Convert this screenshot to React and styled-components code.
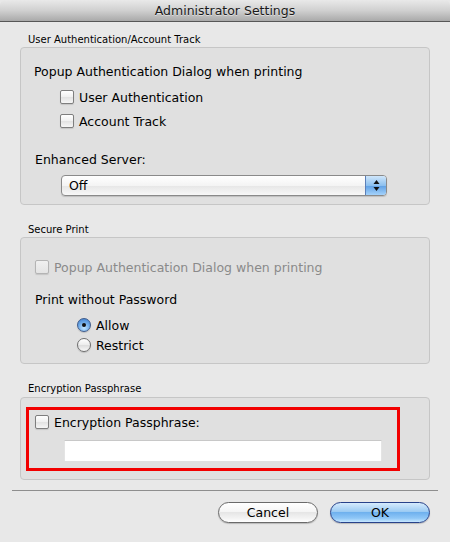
import React from "react"
import styled, { createGlobalStyle } from "styled-components"

const GlobalStyle = createGlobalStyle`
  html, body {
    margin: 0;
    padding: 0;
    background: #e8e8e8;
  }
  body {
    font-family: "DejaVu Sans", "Liberation Sans", sans-serif;
    color: #000;
  }
`

const Window = styled.div`
  width: 450px;
  height: 542px;
  background: #e8e8e8;
  display: flex;
  flex-direction: column;
  overflow: hidden;
  border-radius: 5px 5px 0 0;
`

const TitleBar = styled.div`
  height: 21px;
  border-bottom: 1px solid #575757;
  background: linear-gradient(#e9e9e9, #d0d0d0 50%, #a9a9a9);
  display: flex;
  align-items: center;
  justify-content: center;
  font-size: 12.5px;
  color: #1a1a1a;
  text-shadow: 0 1px 0 rgba(255, 255, 255, 0.5);
`

const Content = styled.div`
  padding: 11px 20px 0 20px;
  display: flex;
  flex-direction: column;
`

const Group = styled.section`
  display: flex;
  flex-direction: column;
  margin-bottom: ${(p) => p.$gap || 0}px;
`

const GroupLabel = styled.div`
  font-size: 10px;
  line-height: 14px;
  padding-left: 8px;
  margin-bottom: ${(p) => p.$after || 0}px;
`

const GroupBox = styled.div`
  border: 1px solid #c6c6c6;
  border-radius: 4px;
  background: #e0e0e0;
  padding: ${(p) => p.$pad};
  display: flex;
  flex-direction: column;
`

const Heading = styled.div`
  font-size: 12.5px;
  line-height: 16px;
  margin-left: ${(p) => p.$indent || 0}px;
  margin-top: ${(p) => p.$top || 0}px;
`

const Row = styled.label`
  display: flex;
  align-items: center;
  gap: 5px;
  height: ${(p) => p.$h || 24}px;
  margin-left: ${(p) => p.$indent || 0}px;
  margin-top: ${(p) => p.$top || 0}px;
  font-size: 12.5px;
  color: ${(p) => (p.$disabled ? "#8a8a8a" : "#000")};
`

const Box = styled.span`
  width: 12px;
  height: 12px;
  border: 1px solid ${(p) => (p.$disabled ? "#b4b4b4" : "#7e7e7e")};
  border-radius: 2px;
  background: ${(p) =>
    p.$disabled
      ? "linear-gradient(#f0f0f0, #e4e4e4)"
      : "linear-gradient(#ffffff, #f0f0f0 50%, #e2e2e2 51%, #f6f6f6)"};
  box-shadow: 0 1px 1px rgba(0, 0, 0, 0.12);
  flex: none;
`

const Radio = styled.span`
  position: relative;
  width: 12px;
  height: 12px;
  border-radius: 50%;
  border: 1px solid ${(p) => (p.$on ? "#3e5b8c" : "#6e6e6e")};
  background: ${(p) =>
    p.$on
      ? "radial-gradient(circle at 50% 75%, #bfe4ff, #6aa7e6 55%, #3a78c8)"
      : "linear-gradient(#ffffff, #ececec 50%, #dcdcdc 51%, #f8f8f8)"};
  box-shadow: 0 1px 1px rgba(0, 0, 0, 0.15);
  flex: none;

  &::after {
    content: "";
    display: ${(p) => (p.$on ? "block" : "none")};
    position: absolute;
    left: 4px;
    top: 4px;
    width: 4px;
    height: 4px;
    border-radius: 50%;
    background: #111;
  }
`

const Select = styled.div`
  margin: 7px 0 0 ${(p) => p.$indent}px;
  width: 326px;
  height: 21px;
  box-sizing: border-box;
  border: 1px solid #8a8a8a;
  border-radius: 4px;
  background: linear-gradient(#ffffff, #f4f4f4 50%, #e6e6e6 51%, #f8f8f8);
  box-shadow: 0 1px 1px rgba(0, 0, 0, 0.15);
  display: flex;
  align-items: stretch;
  overflow: hidden;
  font-size: 12.5px;
`

const SelectValue = styled.div`
  flex: 1;
  display: flex;
  align-items: center;
  padding-left: 7px;
`

const Stepper = styled.div`
  width: 20px;
  border-left: 1px solid #5b7fb8;
  background: linear-gradient(#cfe6fb, #8cc0ef 50%, #5e9fe4 51%, #a4d2fb);
  display: flex;
  align-items: center;
  justify-content: center;
`

const Options = styled.div`
  display: flex;
  flex-direction: column;
  margin-top: 7px;
`

const Frame = styled.div`
  margin-left: 5px;
  width: 374px;
  box-sizing: border-box;
  border: 3px solid #f20000;
  padding: 0 0 7px 6px;
  display: flex;
  flex-direction: column;
`

const TextField = styled.div`
  margin: 6px 0 0 29px;
  width: 318px;
  height: 21px;
  box-sizing: border-box;
  background: #fff;
  border-top: 1px solid #c8c8c8;
  border-left: 1px solid #e4e4e4;
  border-right: 1px solid #e4e4e4;
`

const Separator = styled.hr`
  margin: 10px -8px 0 -8px;
  border: none;
  border-top: 1px solid #8e8e8e;
  height: 0;
`

const Buttons = styled.div`
  display: flex;
  justify-content: flex-end;
  gap: 12px;
  margin-top: 11px;
`

const Button = styled.button`
  width: 100px;
  height: 21px;
  border-radius: 11px;
  font-family: inherit;
  font-size: 12.5px;
  color: #000;
  padding: 0;
  border: 1px solid ${(p) => (p.$primary ? "#28428a" : "#6a6a6a")};
  background: ${(p) =>
    p.$primary
      ? "linear-gradient(#d6ebfd, #9ccbf3 45%, #6fb1ee 50%, #8fc7f7 80%, #c7e7ff)"
      : "linear-gradient(#ffffff, #f5f5f5 45%, #e6e6e6 50%, #f3f3f3 80%, #ffffff)"};
  box-shadow: 0 1px 1px rgba(0, 0, 0, 0.2);
`

const Check = ({ label, indent, disabled, top }) => (
  <Row $indent={indent} $disabled={disabled} $top={top}>
    <Box $disabled={disabled} />
    {label}
  </Row>
)

const Option = ({ label, on }) => (
  <Row $indent={42} $h={20}>
    <Radio $on={on} />
    {label}
  </Row>
)

const Arrows = () => (
  <svg width="7" height="13" viewBox="0 0 7 13">
    <path d="M3.5 1 L6.5 5 L0.5 5 Z" fill="#111" />
    <path d="M3.5 12 L6.5 8 L0.5 8 Z" fill="#111" />
  </svg>
)

export default function App() {
  return (
    <>
      <GlobalStyle />
      <Window>
        <TitleBar>Administrator Settings</TitleBar>
        <Content>
          <Group $gap={18}>
            <GroupLabel>User Authentication/Account Track</GroupLabel>
            <GroupBox $pad="16px 0 8px 13px">
              <Heading>Popup Authentication Dialog when printing</Heading>
              <Check label="User Authentication" indent={26} top={5} />
              <Check label="Account Track" indent={26} />
              <Heading $indent={1} $top={19}>Enhanced Server:</Heading>
              <Select $indent={27}>
                <SelectValue>Off</SelectValue>
                <Stepper>
                  <Arrows />
                </Stepper>
              </Select>
            </GroupBox>
          </Group>

          <Group $gap={18}>
            <GroupLabel>Secure Print</GroupLabel>
            <GroupBox $pad="17px 0 8px 14px">
              <Check label="Popup Authentication Dialog when printing" disabled />
              <Heading $top={13}>Print without Password</Heading>
              <Options>
                <Option label="Allow" on />
                <Option label="Restrict" />
              </Options>
            </GroupBox>
          </Group>

          <Group>
            <GroupLabel $after={1}>Encryption Passphrase</GroupLabel>
            <GroupBox $pad="9px 0 8px 0">
              <Frame>
                <Check label="Encryption Passphrase:" />
                <TextField />
              </Frame>
            </GroupBox>
          </Group>

          <Separator />
          <Buttons>
            <Button>Cancel</Button>
            <Button $primary>OK</Button>
          </Buttons>
        </Content>
      </Window>
    </>
  )
}
